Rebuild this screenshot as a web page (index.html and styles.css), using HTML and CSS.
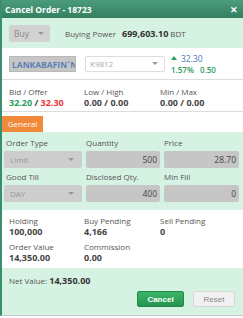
FILE: index.html
```html
<!DOCTYPE html>
<html>
<head>
    <title>Cancel Order</title>
    <link rel="stylesheet" href="styles.css">
</head>
<body>
    <div class="dialog">
        <div class="header">
            <span class="title">Cancel Order - 18723</span>
            <span class="close">&#x2715;</span>
        </div>

        <div class="band top-band">
            <div class="select side-select">Buy <span class="caret"></span></div>
            <span class="label-inline">Buying Power</span>
            <span class="power">699,603.10</span>
            <span class="label-inline">BDT</span>
        </div>

        <div class="symbol-row">
            <div class="symbol">LANKABAFIN`N</div>
            <div class="select account-select">K9812 <span class="caret"></span></div>
            <div class="change">
                <div class="last"><span class="up"></span>32.30</div>
                <div class="pct">1.57% <span class="diff">0.50</span></div>
            </div>
        </div>

        <div class="cols quote-row">
            <div>
                <div class="lbl">Bid / Offer</div>
                <div class="val"><span class="green">32.20</span> / <span class="red">32.30</span></div>
            </div>
            <div>
                <div class="lbl">Low / High</div>
                <div class="val">0.00 / 0.00</div>
            </div>
            <div>
                <div class="lbl">Min / Max</div>
                <div class="val">0.00 / 0.00</div>
            </div>
        </div>

        <div class="tabs">
            <span class="tab">General</span>
        </div>

        <div class="band form">
            <div class="field">
                <div class="lbl">Order Type</div>
                <div class="select form-select">Limit <span class="caret"></span></div>
            </div>
            <div class="field">
                <div class="lbl">Quantity</div>
                <div class="input">500</div>
            </div>
            <div class="field">
                <div class="lbl">Price</div>
                <div class="input">28.70</div>
            </div>
            <div class="field">
                <div class="lbl">Good Till</div>
                <div class="select form-select">DAY <span class="caret"></span></div>
            </div>
            <div class="field">
                <div class="lbl">Disclosed Qty.</div>
                <div class="input">400</div>
            </div>
            <div class="field">
                <div class="lbl">Min Fill</div>
                <div class="input">0</div>
            </div>
        </div>

        <div class="cols stats">
            <div>
                <div class="lbl">Holding</div>
                <div class="val">100,000</div>
            </div>
            <div>
                <div class="lbl">Buy Pending</div>
                <div class="val">4,166</div>
            </div>
            <div>
                <div class="lbl">Sell Pending</div>
                <div class="val">0</div>
            </div>
            <div>
                <div class="lbl">Order Value</div>
                <div class="val">14,350.00</div>
            </div>
            <div>
                <div class="lbl">Commission</div>
                <div class="val">0.00</div>
            </div>
        </div>

        <div class="band footer">
            <div class="net">Net Value: <b>14,350.00</b></div>
            <div class="buttons">
                <button class="btn btn-cancel">Cancel</button>
                <button class="btn btn-reset">Reset</button>
            </div>
        </div>
    </div>
</body>
</html>
```

FILE: styles.css
```css
body {
    margin: 0;
    padding: 0;
    background-color: #fff;
    font-family: "Open Sans", Arial, sans-serif;
    font-size: 8px;
    color: #444;
}

.dialog {
    width: 243px;
    border-left: 2px solid #3b8d6f;
    box-sizing: border-box;
    border-bottom: 1px solid #c9c9c9;
}

.header {
    height: 18px;
    display: flex;
    align-items: center;
    justify-content: space-between;
    padding: 0 5px 0 3px;
    background: linear-gradient(#4b9c7d, #33805f);
    color: #fff;
}

.title {
    font-weight: bold;
    font-size: 8.5px;
}

.close {
    font-weight: bold;
    font-size: 9px;
}

.band {
    background-color: #d6f2e3;
}

.top-band {
    height: 30px;
    display: flex;
    align-items: center;
    padding-left: 7px;
}

.select {
    display: flex;
    align-items: center;
    justify-content: space-between;
    box-sizing: border-box;
    border-radius: 2px;
    color: #999;
}

.caret {
    width: 0;
    height: 0;
    border-left: 3px solid transparent;
    border-right: 3px solid transparent;
    border-top: 3px solid #999;
}

.side-select {
    width: 41px;
    height: 17px;
    padding: 0 6px 0 5px;
    background-color: #d2d2d2;
    font-size: 8.5px;
    color: #888;
    margin-right: 15px;
}

.label-inline {
    color: #555;
    margin-right: 6px;
}

.power {
    font-weight: bold;
    font-size: 9px;
    color: #333;
    margin-right: 2px;
}

.symbol-row {
    height: 31px;
    display: flex;
    align-items: center;
    padding-left: 7px;
    border-bottom: 1px solid #dcdcdc;
}

.symbol {
    width: 67px;
    height: 16px;
    line-height: 16px;
    box-sizing: border-box;
    background-color: #c6c6c6;
    border: 1px solid #b9b9b9;
    padding-left: 2px;
    color: #5a80b5;
    font-weight: bold;
    font-size: 8.5px;
    overflow: hidden;
    white-space: nowrap;
    margin-right: 9px;
}

.account-select {
    width: 80px;
    height: 16px;
    padding: 0 6px 0 4px;
    background-color: #fff;
    border: 1px solid #ddd;
    color: #aaa;
    margin-right: 6px;
}

.change {
    line-height: 11px;
}

.last {
    color: #4a78b4;
    font-size: 8.5px;
    display: flex;
    align-items: center;
}

.up {
    width: 0;
    height: 0;
    border-left: 3px solid transparent;
    border-right: 3px solid transparent;
    border-bottom: 4px solid #2a9d5c;
    margin-right: 4px;
}

.pct {
    color: #2a9d5c;
    font-weight: 600;
}

.diff {
    margin-left: 4px;
}

.cols {
    display: grid;
    grid-template-columns: 75px 76px 1fr;
    padding-left: 7px;
}

.lbl {
    color: #555;
    line-height: 11px;
}

.val {
    font-weight: bold;
    font-size: 9px;
    color: #444;
    line-height: 12px;
}

.green {
    color: #2a9d5c;
}

.red {
    color: #e8373b;
}

.quote-row {
    height: 32px;
    align-content: center;
    border-bottom: 1px solid #dcdcdc;
    box-sizing: border-box;
    padding-top: 3px;
}

.tabs {
    height: 20px;
    display: flex;
    align-items: flex-end;
}

.tab {
    width: 41px;
    height: 16px;
    line-height: 16px;
    text-align: center;
    background-color: #f0893a;
    color: #fff;
    font-size: 8px;
}

.form {
    display: grid;
    grid-template-columns: 78px 74px 75px;
    column-gap: 4px;
    padding: 4px 0 8px 2px;
    row-gap: 2px;
}

.field .lbl {
    height: 15px;
    line-height: 13px;
    padding-left: 2px;
}

.form .field:nth-child(2) .lbl,
.form .field:nth-child(3) .lbl,
.form .field:nth-child(5) .lbl,
.form .field:nth-child(6) .lbl {
    padding-left: 0;
}

.form-select {
    height: 17px;
    padding: 0 8px 0 6px;
    background-color: #cdcdcd;
    color: #999;
}

.input {
    height: 17px;
    line-height: 17px;
    box-sizing: border-box;
    background-color: #c6c6c6;
    border-radius: 2px;
    text-align: right;
    padding-right: 3px;
    font-size: 8.5px;
    color: #444;
}

.stats {
    padding-top: 5px;
    padding-bottom: 4px;
    row-gap: 3px;
}

.footer {
    height: 47px;
    padding: 6px 8px 0 7px;
    box-sizing: border-box;
}

.net {
    color: #555;
}

.net b {
    font-size: 9px;
    color: #333;
}

.buttons {
    display: flex;
    justify-content: flex-end;
    gap: 9px;
    margin-top: 4px;
}

.btn {
    height: 16px;
    font-family: Arial, "Liberation Sans", sans-serif;
    font-size: 8px;
    padding: 0;
    border-radius: 2px;
}

.btn-cancel {
    width: 47px;
    background: linear-gradient(#3cb566, #25944f);
    border: 1px solid #23894a;
    color: #fff;
    font-weight: bold;
}

.btn-reset {
    width: 42px;
    background-color: #f1f1f1;
    border: 1px solid #d6d6d6;
    color: #888;
}
```
